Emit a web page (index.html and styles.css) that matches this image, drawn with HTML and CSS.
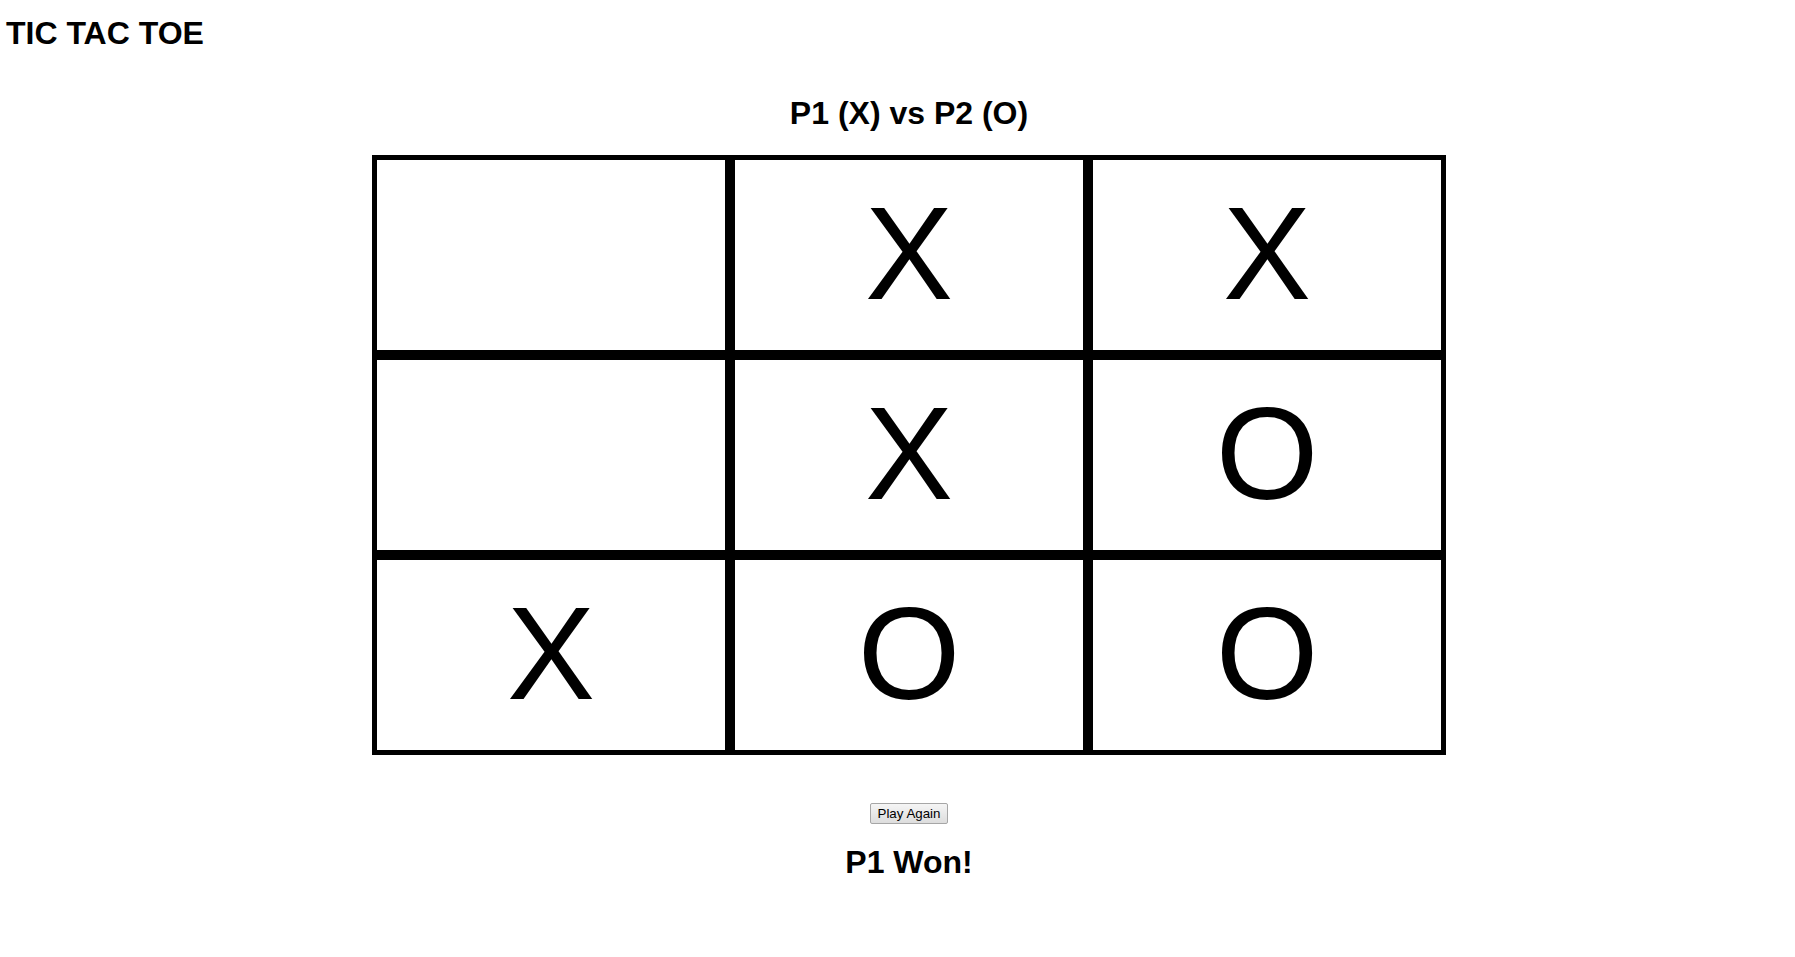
FILE: index.html
```html
<!DOCTYPE html>
<html lang="en">
  <head>
    <meta charset="UTF-8" />
    <meta name="viewport" content="width=device-width, initial-scale=1.0" />
    <title>Tic Tac Toe</title>
    <link rel="stylesheet" href="styles.css">
  </head>
  <body>
    <h1 class="title">TIC TAC TOE</h1>
    <div class="game">
      <h2 class="players">P1 (X) vs P2 (O)</h2>
      <!-- board 棋盘 -->
      <div class="board">
        <div class="cell"></div>
        <div class="cell">X</div>
        <div class="cell">X</div>
        <div class="cell"></div>
        <div class="cell">X</div>
        <div class="cell">O</div>
        <div class="cell">X</div>
        <div class="cell">O</div>
        <div class="cell">O</div>
      </div>
      <div class="controls">
        <button class="againBtn">Play Again</button>
      </div>
      <h2 class="result">P1 Won!</h2>
    </div>
  </body>
</html>
```

FILE: styles.css
```css
* {
  box-sizing: border-box;
}
body {
  margin: 0;
  font-family: "Liberation Sans", Arial, sans-serif;
  color: #000;
  background: #fff;
}
.title {
  margin: 0;
  padding: 15px 6px 0;
  font-size: 32px;
  line-height: 37px;
  font-weight: bold;
}
.game {
  padding-left: 23px;
  text-align: center;
}
.players {
  margin: 43px 0 0;
  font-size: 32px;
  line-height: 37px;
}
.board {
  display: grid;
  grid-template-columns: repeat(3, 358px);
  grid-template-rows: repeat(3, 200px);
  width: 1074px;
  margin: 23px auto 0;
}
.cell {
  display: flex;
  align-items: center;
  justify-content: center;
  padding-bottom: 3px;
  border: 5px solid #000;
  font-size: 132px;
  cursor: pointer;
}
.controls {
  margin-top: 48px;
}
.againBtn {
  height: 21px;
  padding: 1px 7px;
  font-family: "Liberation Sans", Arial, sans-serif;
  font-size: 13.33px;
  line-height: 15px;
  color: #000;
  background: linear-gradient(#f5f5f5, #dddddd);
  border: 1px solid #a6a6a6;
  border-radius: 2px;
  cursor: pointer;
}
.result {
  margin: 20px 0 0;
  font-size: 32px;
  line-height: 37px;
}
```
